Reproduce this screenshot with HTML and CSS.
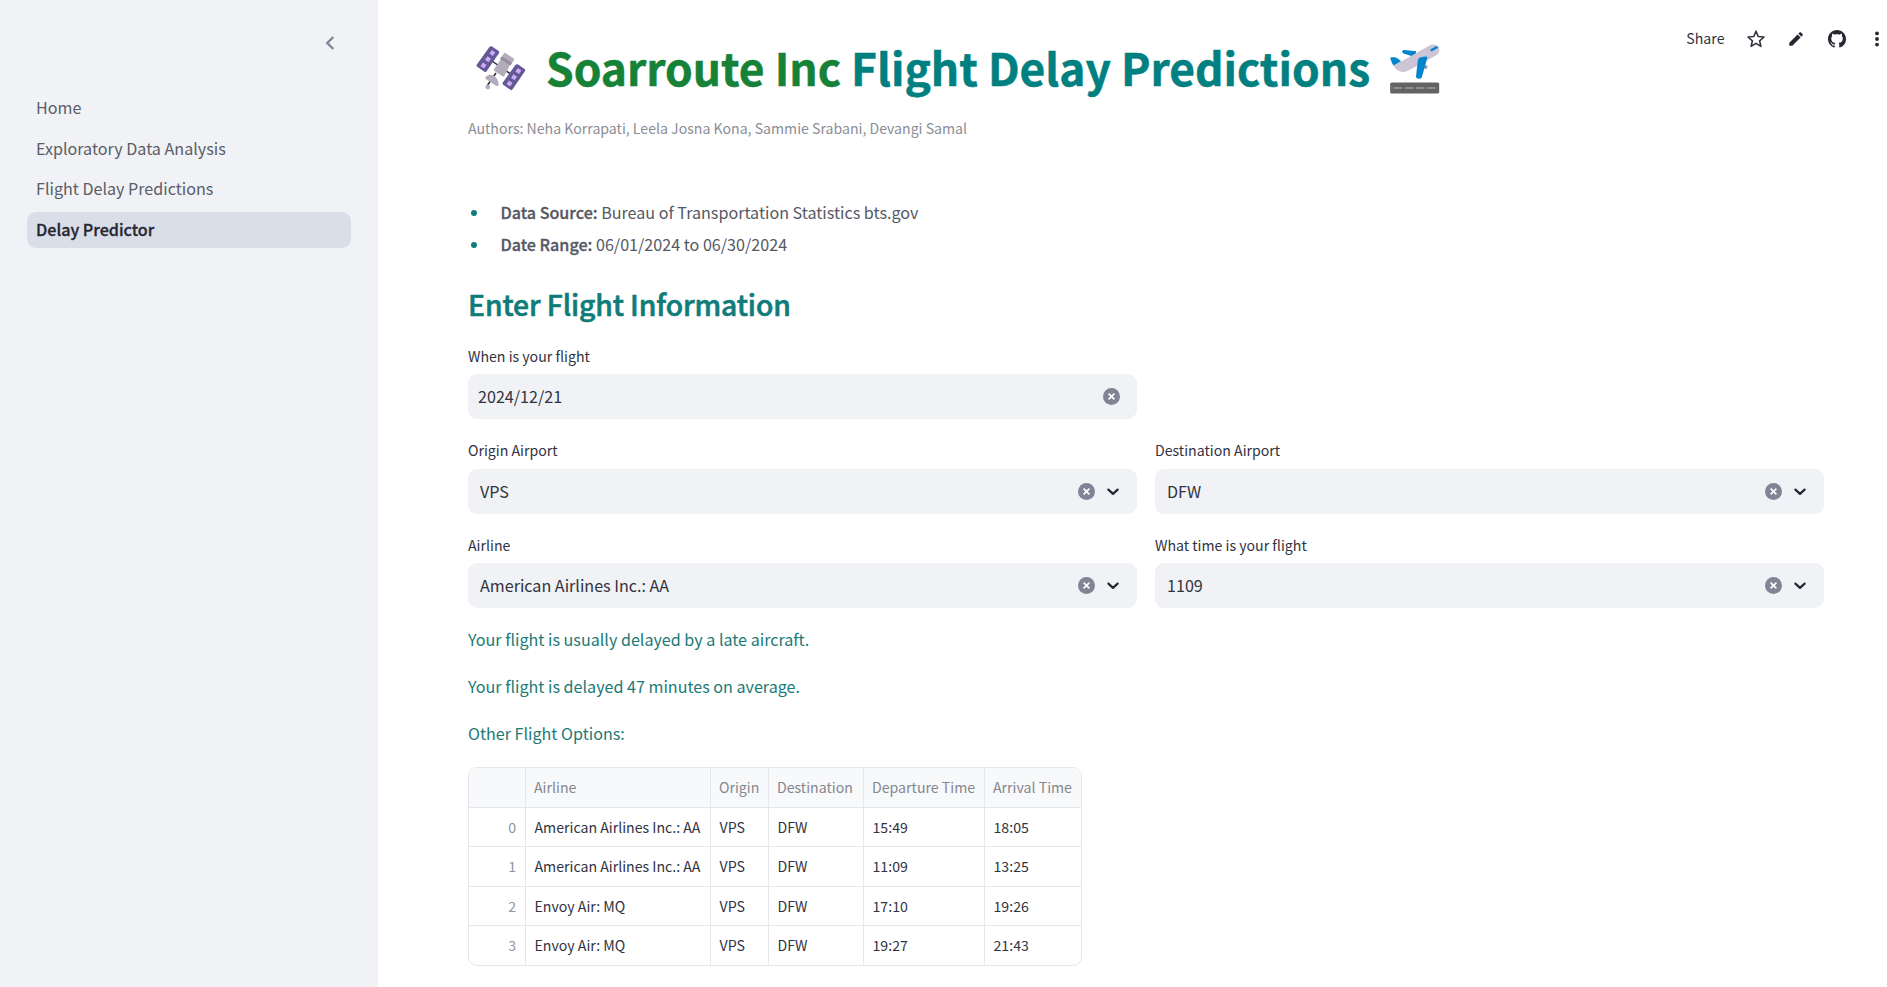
FILE: index.html
```html
<!DOCTYPE html>
<html lang="en">
<head>
<meta charset="utf-8">
<title>Delay Predictor</title>
<link rel="stylesheet" href="styles.css">
</head>
<body>
<svg class="defs" aria-hidden="true">
  <symbol id="clear" viewBox="0 0 17 17"><circle cx="8.5" cy="8.5" r="8.5" fill="#808495"/><path d="M5.6 5.6l5.8 5.8M11.4 5.6l-5.8 5.8" stroke="#fff" stroke-width="1.7"/></symbol>
  <symbol id="chevron" viewBox="0 0 12 8"><path d="M1.4 1.6L6 5.9l4.6-4.3" fill="none" stroke="#262730" stroke-width="2.2" stroke-linecap="round" stroke-linejoin="round"/></symbol>
</svg>
<div class="app">
  <aside class="sidebar">
    <div class="collapse"><svg width="10" height="14" viewBox="0 0 10 14"><path d="M8.3 1L2.3 7l6 6" fill="none" stroke="#808495" stroke-width="2.4"/></svg></div>
    <nav class="nav">
      <a class="nav-item">Home</a>
      <a class="nav-item">Exploratory Data Analysis</a>
      <a class="nav-item">Flight Delay Predictions</a>
      <a class="nav-item active">Delay Predictor</a>
    </nav>
  </aside>
  <main class="main">
    <div class="toolbar">
      <span class="share">Share</span>
      <svg class="tool" width="20" height="20" viewBox="0 0 20 20"><path d="M10 2.200l2.200 5.300 5.800.5-4.400 3.800 1.300 5.600-4.900-3-4.900 3 1.300-5.600L2 8l5.800-.5z" fill="none" stroke="#31333f" stroke-width="1.600" stroke-linejoin="round"/></svg>
      <svg class="tool" width="20" height="20" viewBox="0 0 20 20"><path d="M3.3 13.8L11.6 5.5l3 3-8.3 8.3h-3zM12.4 4.7l1.1-1.1c.5-.5 1-.5 1.5 0l1.5 1.5c.5.5.5 1 0 1.500l-1.100 1.100z" fill="#262730"/></svg>
      <svg class="tool" width="18" height="18" viewBox="0 0 16 16"><path fill="#262730" d="M8 0C3.580 0 0 3.580 0 8c0 3.540 2.290 6.530 5.470 7.590.4.070.55-.17.55-.38 0-.19-.010-.82-.010-1.490-2.010.37-2.530-.49-2.690-.94-.090-.23-.48-.94-.82-1.130-.28-.15-.68-.52-.010-.53.63-.010 1.080.58 1.230.82.72 1.210 1.870.87 2.330.66.070-.52.28-.87.51-1.070-1.780-.2-3.640-.89-3.640-3.950 0-.87.31-1.590.82-2.150-.080-.2-.36-1.020.080-2.120 0 0 .67-.21 2.200.82.64-.18 1.320-.27 2-.27s1.360.090 2 .27c1.530-1.040 2.200-.82 2.200-.82.44 1.100.16 1.920.080 2.120.51.56.82 1.270.82 2.150 0 3.070-1.870 3.750-3.650 3.950.29.25.54.73.54 1.480 0 1.070-.010 1.930-.010 2.200 0 .21.15.46.55.38A8.013 8.013 0 0 0 16 8c0-4.420-3.580-8-8-8z"/></svg>
      <svg class="tool" width="6" height="18" viewBox="0 0 6 18"><g fill="#262730"><circle cx="3" cy="3.400" r="1.900"/><circle cx="3" cy="9" r="1.900"/><circle cx="3" cy="14.600" r="1.900"/></g></svg>
    </div>

    <h1 class="title">
      <svg class="satellite" width="50" height="48" viewBox="0 0 50 48">
        <path d="M16 16l20 14M20 28l-9 13" stroke="#222" stroke-width="1.400"/>
        <path d="M13.400 2Q14.500.6 16 1.500l6.600 4.600q1.100.9.300 2.100L10.600 26.300q-.9 1.300-2.200.5L1.200 21.700q-1.200-.9-.3-2.200z" fill="#635994"/><path d="M15.900 5l3.500 2.500-2.500 3.500-3.500-2.500zM11.500 11.300l3.500 2.500-2.500 3.500L9 14.800zM7 17.600l3.500 2.500L8 23.600 4.500 21.100z" fill="#cdabfb"/>
        <g transform="translate(26 18)"><path d="M13.400 2Q14.500.6 16 1.500l6.600 4.600q1.100.9.300 2.100L10.600 26.300q-.9 1.300-2.200.5L1.200 21.700q-1.200-.9-.3-2.200z" fill="#635994"/><path d="M15.900 5l3.500 2.500-2.500 3.500-3.500-2.500zM11.500 11.300l3.500 2.500-2.500 3.500L9 14.800zM7 17.600l3.500 2.500L8 23.600 4.500 21.100z" fill="#cdabfb"/></g>
        <path d="M25.500 13.500l8.800 5.800-5.800 11.500q-.7 1.200-2 .4l-8-5.200q-1.200-.8-.4-2z" fill="#b4acbc"/>
        <path d="M27.800 8.400q.7-1 1.700-.4l8 5.200q1 .7.4 1.700l-1.500 2.700-10.300-6.500z" fill="#b4acbc"/>
        <path d="M26.100 11.100l10.300 6.500-2 3-10.600-6.500z" fill="#998ea4"/>
        <path d="M10.200 31.500c4-4 12-.5 12.500 8 0 1.400-1.500 2-2.700 1.300L9.800 34c-1-.7-.6-1.700.4-2.500z" fill="#b4acbc"/>
        <circle cx="11.800" cy="42" r="2.400" fill="#b4acbc"/>
      </svg>
      <span class="brand">Soarroute Inc</span>
      <span class="topic">Flight Delay Predictions</span>
      <svg class="departure" width="50" height="50" viewBox="0 0 50 50">
        <path d="M12.500 8.300c-.9-1.300.3-2.300 1.700-2.300l12 1.200-1 6-11.500-3.600z" fill="#0084ce"/>
        <circle cx="35.500" cy="23" r="2" fill="#9b9b9b"/>
        <path d="M3.300 21.500c4 6.700 10 8 16 4.500L46 11.500c3.600-2 4.300-6 2.200-9-1.800-2.300-5.500-2.700-8.700-1L18 13.800z" fill="#cdc4d6"/>
        <path d="M.5 15c-.5-1 0-1.700 1-1.700 3-.2 5 .2 6.500 1.500l3 2.500-7.500 4.300C2 19.700 1.200 17 .5 15z" fill="#0084ce"/>
        <path d="M32 13l4-.5c1 0 1.500.7 1.200 1.700l-5.400 19c-.5 2-5.800 2.300-5.800-.7l1.800-16c.2-2 2-3.200 4.200-3.500zM41 5.100l5.700-3.200 1.500 1.800-6.200 3.500c-1.400.6-2.300-1.300-1-2.100z" fill="#0084ce"/>
        <rect x=".2" y="38.500" width="49" height="11" rx="1.500" fill="#636363"/>
        <path d="M4 44h7.500M15.500 44H23M26.500 44H34M37.500 44H45" stroke="#9b9b9b" stroke-width="1.600" stroke-linecap="round"/>
      </svg>
    </h1>
    <p class="authors">Authors: Neha Korrapati, Leela Josna Kona, Sammie Srabani, Devangi Samal</p>

    <ul class="facts">
      <li><b>Data Source:</b> Bureau of Transportation Statistics bts.gov</li>
      <li><b>Date Range:</b> 06/01/2024 to 06/30/2024</li>
    </ul>

    <h2 class="heading">Enter Flight Information</h2>

    <div class="form">
      <div class="field wide">
        <label class="label">When is your flight</label>
        <div class="control date"><span class="value">2024/12/21</span><svg class="clear"><use href="#clear"/></svg></div>
      </div>
      <div class="field">
        <label class="label">Origin Airport</label>
        <div class="control"><span class="value">VPS</span><svg class="clear"><use href="#clear"/></svg><svg class="chevron"><use href="#chevron"/></svg></div>
      </div>
      <div class="field">
        <label class="label">Destination Airport</label>
        <div class="control"><span class="value">DFW</span><svg class="clear"><use href="#clear"/></svg><svg class="chevron"><use href="#chevron"/></svg></div>
      </div>
      <div class="field">
        <label class="label">Airline</label>
        <div class="control"><span class="value">American Airlines Inc.: AA</span><svg class="clear"><use href="#clear"/></svg><svg class="chevron"><use href="#chevron"/></svg></div>
      </div>
      <div class="field">
        <label class="label">What time is your flight</label>
        <div class="control"><span class="value">1109</span><svg class="clear"><use href="#clear"/></svg><svg class="chevron"><use href="#chevron"/></svg></div>
      </div>
    </div>

    <div class="results">
      <p>Your flight is usually delayed by a late aircraft.</p>
      <p>Your flight is delayed 47 minutes on average.</p>
      <p>Other Flight Options:</p>
    </div>

    <div class="table">
      <div class="row head"><span></span><span>Airline</span><span>Origin</span><span>Destination</span><span>Departure Time</span><span>Arrival Time</span></div>
      <div class="row"><span>0</span><span>American Airlines Inc.: AA</span><span>VPS</span><span>DFW</span><span>15:49</span><span>18:05</span></div>
      <div class="row"><span>1</span><span>American Airlines Inc.: AA</span><span>VPS</span><span>DFW</span><span>11:09</span><span>13:25</span></div>
      <div class="row"><span>2</span><span>Envoy Air: MQ</span><span>VPS</span><span>DFW</span><span>17:10</span><span>19:26</span></div>
      <div class="row"><span>3</span><span>Envoy Air: MQ</span><span>VPS</span><span>DFW</span><span>19:27</span><span>21:43</span></div>
    </div>
  </main>
</div>
</body>
</html>
```
FILE: styles.css
```css
* { box-sizing: border-box; }
body {
  margin: 0;
  background: #fff;
  color: #31333f;
  font-family: "Noto Sans CJK SC", "Open Sans", sans-serif;
  font-size: 16.130px;
  overflow: hidden;
}
h1, h2, p, ul { margin: 0; padding: 0; }
svg { display: block; flex: none; }
.defs { position: absolute; width: 0; height: 0; }

.app { display: flex; height: 987px; }

.sidebar { width: 378px; flex: none; background: #f0f2f6; }
.collapse { height: 90px; padding: 36px 43px 0 0; display: flex; justify-content: flex-end; }
.nav { display: flex; flex-direction: column; gap: 4.500px; padding: 0 27px; }
.nav-item {
  height: 36px;
  line-height: 34px;
  padding-left: 9px;
  border-radius: 9px;
  color: #5b5d67;
  white-space: nowrap;
}
.nav-item.active { background: #dadee9; color: #262730; font-weight: 500; -webkit-text-stroke: .3px; }

.main { flex: 1; padding-left: 90px; position: relative; }

.toolbar {
  position: absolute;
  top: 29px;
  right: 7px;
  height: 20px;
  display: flex;
  align-items: center;
}
.share { font-size: 14.150px; line-height: 20px; margin-right: 21.500px; padding-bottom: 3px; }
.tool { margin-right: 20px; }
.tool:nth-of-type(3) { margin-right: 28px; margin-left: 2px; }
.tool:last-child { margin-right: 0; }

.title {
  height: 107px;
  padding: 42px 0 0 8px;
  display: flex;
  align-items: flex-start;
  font-size: 44.320px;
  line-height: 50px;
  font-weight: 700;
  -webkit-text-stroke: .5px;
  white-space: nowrap;
}
.satellite { margin: 3px 20px 0 0; }
.departure { margin-top: 2px; }
.brand { color: #158237; margin-right: 10px; }
.topic { color: #008080; margin-right: 20px; }

.authors { height: 92px; padding-top: 10px; font-size: 14.120px; line-height: 22px; color: #8b8d95; }

.facts { list-style: none; color: #565863; }
.facts li { position: relative; height: 32px; line-height: 26px; padding-left: 32.500px; }
.facts li::before {
  content: "";
  position: absolute;
  left: 3px;
  top: 11px;
  width: 6px;
  height: 6px;
  border-radius: 50%;
  background: #0b7f7c;
}
.facts b { font-weight: 500; -webkit-text-stroke: .3px; }

.heading {
  height: 83px;
  padding-top: 20px;
  font-size: 28.300px;
  line-height: 42px;
  font-weight: 500;
  letter-spacing: -.1px;
  -webkit-text-stroke: .6px;
  color: #0f7c79;
}

.form { display: grid; grid-template-columns: 669px 669px; grid-template-rows: 95px 94px 91px; column-gap: 18px; }
.field.wide { grid-column: 1 / 3; width: 669px; }
.label { display: block; height: 28px; font-size: 14.150px; line-height: 20px; }
.field:nth-child(2) .label, .field:nth-child(3) .label { line-height: 18px; }
.control {
  height: 45px;
  display: flex;
  align-items: center;
  background: #f0f2f6;
  border-radius: 9px;
  padding: 0 17.500px 0 12px;
}
.control.date { padding-left: 10px; padding-right: 17px; }
.value { flex: 1; padding-bottom: 2px; }
.clear { width: 17px; height: 17px; }
.chevron { width: 12px; height: 8px; margin: 0 .5px 0 12px; }

.results { display: flex; flex-direction: column; gap: 20px; color: #1c7a76; padding-bottom: 19.500px; }
.results p { line-height: 27px; }

.table { width: 614px; border: 1px solid #e6e7ea; border-radius: 9px; overflow: hidden; font-size: 14.150px; }
.row { display: grid; grid-template-columns: 57px 185px 58px 95px 121px 1fr; height: 39.400px; line-height: 38px; }
.row span { border-right: 1px solid #e6e7ea; border-bottom: 1px solid #e6e7ea; padding-left: 8.500px; white-space: nowrap; }
.row span:first-child { padding: 0 9px 0 0; text-align: right; color: #92949b; }
.row span:last-child { border-right: 0; }
.row:last-child span { border-bottom: 0; }
.row.head { height: 40.400px; background: #f8f9fb; color: #85878f; }
.head span { padding-left: 8px; }
```
